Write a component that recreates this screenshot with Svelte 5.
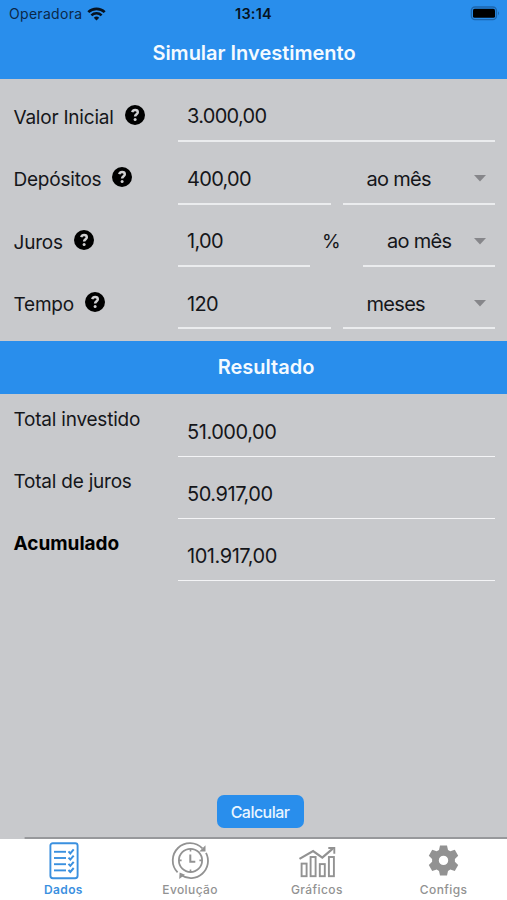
<script lang="ts">
    type TabId = "dados" | "evolucao" | "graficos" | "configs";

    interface Field {
        label: string;
        value: string;
        unit?: string;
        suffix?: string;
    }

    let activeTab: TabId = $state("dados");

    const fields: Field[] = [
        { label: "Valor Inicial", value: "3.000,00" },
        { label: "Depósitos", value: "400,00", unit: "ao mês" },
        { label: "Juros", value: "1,00", unit: "ao mês", suffix: "%" },
        { label: "Tempo", value: "120", unit: "meses" },
    ];

    const results = [
        { label: "Total investido", value: "51.000,00" },
        { label: "Total de juros", value: "50.917,00" },
        { label: "Acumulado", value: "101.917,00", strong: true },
    ];

    const tabs: { id: TabId; label: string }[] = [
        { id: "dados", label: "Dados" },
        { id: "evolucao", label: "Evolução" },
        { id: "graficos", label: "Gráficos" },
        { id: "configs", label: "Configs" },
    ];
</script>

<div class="screen">
    <header class="header">
        <div class="status-bar">
            <span class="carrier">
                <span>Operadora</span>
                <svg width="19" height="14" viewBox="0 0 19 14" fill="none" stroke="#07121f" aria-hidden="true">
                    <path d="M1.3 5.1a11.8 11.8 0 0 1 16.4 0" stroke-width="2.7" />
                    <path d="M4.4 8.4a7.3 7.3 0 0 1 10.2 0" stroke-width="2.5" />
                    <path d="M9.5 13.6l-2.7-2.8a3.9 3.9 0 0 1 5.4 0z" fill="#07121f" stroke="none" />
                </svg>
            </span>
            <span class="clock">13:14</span>
            <svg class="battery" width="31" height="15" viewBox="0 0 31 15" aria-hidden="true">
                <rect x="1.4" y="1" width="25" height="12.6" rx="3.6" fill="none" stroke="#1d66ad" stroke-width="1.4" />
                <rect x="3" y="2.8" width="22" height="9" rx="1.6" fill="#000" />
                <path d="M28 5.2q2 2 0 4z" fill="#1d66ad" />
            </svg>
        </div>
        <h1>Simular Investimento</h1>
    </header>

    <section class="form">
        {#each fields as field}
            <div class="row">
                <div class="label">
                    <span>{field.label}</span>
                    <svg class="help" width="20" height="20" viewBox="0 0 20 20" aria-hidden="true">
                        <circle cx="10" cy="10" r="10" fill="#000" />
                        <path d="M7.2 7.2C7.7 5.6 8.7 5 10.1 5c1.7 0 2.7.9 2.7 2.2 0 2-2.7 2-2.7 4.4" fill="none" stroke="#d0d0d2" stroke-width="2.5" />
                        <circle cx="10.1" cy="14.6" r="1.5" fill="#d0d0d2" />
                    </svg>
                </div>
                <div class="controls" class:with-suffix={field.suffix}>
                    <div class="field">{field.value}</div>
                    {#if field.suffix}
                        <span class="suffix">{field.suffix}</span>
                    {/if}
                    {#if field.unit}
                        <div class="field select">
                            <span>{field.unit}</span>
                            <svg width="12" height="7" viewBox="0 0 12 7" aria-hidden="true">
                                <path d="M0 0h12L6 6.6z" fill="#86868a" />
                            </svg>
                        </div>
                    {/if}
                </div>
            </div>
        {/each}
    </section>

    <h2>Resultado</h2>

    <section class="results">
        {#each results as result}
            <div class="row">
                <div class="label" class:strong={result.strong}>{result.label}</div>
                <div class="field">{result.value}</div>
            </div>
        {/each}
    </section>

    <div class="actions">
        <button class="calculate">Calcular</button>
    </div>

    <nav class="tab-bar">
        {#each tabs as tab}
            <button class="tab" class:active={activeTab === tab.id} onclick={() => (activeTab = tab.id)}>
                <svg width="40" height="40" viewBox="0 0 40 40" fill="none" stroke="currentColor" aria-hidden="true">
                    {#if tab.id === "dados"}
                        <rect x="7.4" y="2.2" width="27.2" height="35" rx="2.4" stroke-width="1.9" />
                        {#each [10.8, 17, 23.2, 29.4] as y}
                            <path d="M11 {y}h12" stroke-width="1.9" />
                            <path d="M25.5 {y - 0.4}l1.8 2 3.4-4" stroke-width="2" />
                        {/each}
                    {:else if tab.id === "evolucao"}
                        <g stroke-width="1.8">
                            <circle cx="20.5" cy="19.4" r="11.6" />
                            <path d="M20.3 13.4v7.4h5" stroke-width="2" />
                            <path d="M20.5 7.8v2.6M20.5 28.4V31M9 19.4h2.6M29.4 19.4H32" stroke-width="1.6" />
                            <path d="M7.6 31.4A17.2 17.2 0 0 1 32.4 7.4" />
                            <path d="M36 11.8A17.2 17.2 0 0 1 11 34" />
                        </g>
                        <path d="M35.5 4.2v6.2h-6.2zM9.2 38l.4-6.6 5.4 2.4z" fill="currentColor" stroke="none" />
                    {:else if tab.id === "graficos"}
                        <g stroke-width="1.9">
                            <rect x="4.6" y="22.6" width="5" height="12.6" />
                            <rect x="13.6" y="16" width="5" height="19.2" />
                            <rect x="22.8" y="23.1" width="5" height="12.1" />
                            <rect x="31.9" y="16" width="5" height="19.2" />
                            <path d="M2.5 17.9L16.1 10l9.2 6.6 10.5-9" stroke-width="2.2" />
                            <path d="M31.3 7h6v5.8" />
                        </g>
                    {:else}
                        <path
                            d="M16 4.4h7l1 4.5 2.3 1.3 4.5-1.4 3.4 5.9-3.3 3.3v2.8l3.3 3.3-3.4 5.9-4.5-1.4-2.3 1.3-1 4.5h-7l-1-4.5-2.3-1.3-4.5 1.4-3.4-5.9 3.3-3.3v-2.8l-3.3-3.3 3.4-5.9 4.5 1.4L15 8.9zM19.5 14.7a4.7 4.7 0 1 0 0 9.4 4.7 4.7 0 0 0 0-9.4z"
                            fill="currentColor"
                            stroke="none"
                            fill-rule="evenodd"
                        />
                    {/if}
                </svg>
                <span>{tab.label}</span>
            </button>
        {/each}
    </nav>
</div>

<style>
    :global(body) {
        margin: 0;
    }

    .screen {
        display: flex;
        flex-direction: column;
        width: 507px;
        height: 900px;
        overflow: hidden;
        background: #c8c9cc;
        color: #15161a;
        font-family: Inter, "Liberation Sans", sans-serif;
        font-size: 20px;
    }

    .header {
        height: 79.3px;
        background: #298eec;
    }

    .status-bar {
        display: grid;
        grid-template-columns: 1fr auto 1fr;
        align-items: center;
        height: 27px;
        padding: 0 6px 0 9px;
        font-size: 14px;
        color: #0b2848;
    }

    .carrier {
        display: flex;
        align-items: center;
        gap: 5px;
        letter-spacing: 0.3px;
    }

    .clock {
        margin-right: 3px;
        font-size: 14.5px;
        font-weight: 600;
        letter-spacing: 0.2px;
        color: #061322;
    }

    .battery {
        justify-self: end;
    }

    h1,
    h2 {
        margin: 0;
        color: #f4faff;
        font-size: 20px;
        font-weight: 600;
        text-align: center;
    }

    h1 {
        padding-left: 1px;
        line-height: 52px;
    }

    h2 {
        height: 53.5px;
        padding-left: 25px;
        line-height: 53px;
        background: #298eec;
    }

    .form {
        height: 261.4px;
        padding: 0.5px 12px 0 14px;
        box-sizing: border-box;
    }

    .results {
        padding: 0.7px 12px 0 14px;
    }

    .row {
        display: grid;
        grid-template-columns: 164px 1fr;
        height: 62.2px;
    }

    .form .row {
        height: 62.4px;
    }

    .label {
        display: flex;
        align-items: center;
        gap: 11px;
        margin-left: -0.5px;
        padding-top: 13px;
        font-size: 19px;
        letter-spacing: -0.22px;
    }

    .help {
        margin-top: -5px;
    }

    .controls {
        display: grid;
        grid-auto-flow: column;
        grid-auto-columns: 1fr;
        gap: 12px;
    }

    .controls.with-suffix {
        grid-template-columns: 132px 29px 1fr;
    }

    .field {
        display: flex;
        align-items: center;
        padding: 13px 9px 0;
        border-bottom: 2px solid #ebecee;
        letter-spacing: -0.7px;
    }

    .suffix {
        align-self: center;
        padding-top: 12px;
        font-size: 19px;
    }

    .select {
        justify-content: space-between;
        padding: 13px 9px 0 24px;
    }

    .results .label {
        align-items: flex-start;
    }

    .results .field {
        border-bottom: 1.5px solid #f4f4f6;
        letter-spacing: -0.45px;
    }

    .label.strong {
        font-weight: 700;
        letter-spacing: 0;
        color: #000;
    }

    .actions {
        display: flex;
        flex: 1;
        align-items: flex-end;
        justify-content: center;
        padding: 0 0 9px 13px;
    }

    .calculate {
        width: 87px;
        height: 33px;
        padding: 0;
        border: none;
        border-radius: 7px;
        background: #298eec;
        color: #e8f5ff;
        font: 500 16px Inter, sans-serif;
        letter-spacing: -0.55px;
    }

    .tab-bar {
        display: grid;
        grid-template-columns: repeat(4, 1fr);
        height: 63px;
        flex-shrink: 0;
        box-sizing: border-box;
        border-top: 2px solid;
        border-image: linear-gradient(to right, #c8c9cc 25px, #97989b 26px) 1;
        background: #fff;
        background-clip: padding-box;
    }

    .tab {
        display: flex;
        flex-direction: column;
        align-items: center;
        padding: 2px 0 0;
        border: none;
        background: none;
        color: #929292;
        font: 500 12px Inter, sans-serif;
        letter-spacing: 0.4px;
    }

    .tab span {
        margin-top: 1px;
        line-height: 16px;
    }

    .tab.active {
        color: #3a90df;
        font-weight: 600;
    }
</style>
